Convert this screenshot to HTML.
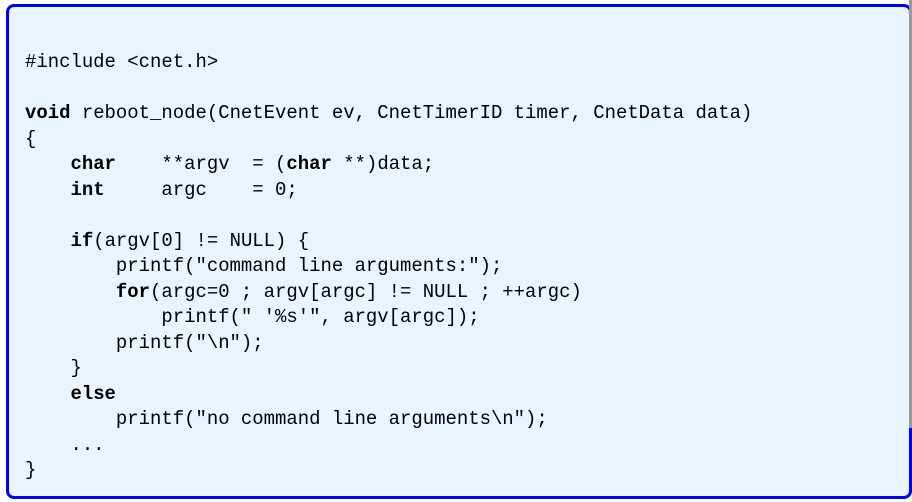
<!DOCTYPE html>
<html><head><style>
html,body{margin:0;padding:0;width:912px;height:502px;background:#fff;overflow:hidden}
.box{position:absolute;left:6px;top:4px;width:900px;height:489px;border:3px solid #0000ff;border-radius:8px;background:#e8f4fe}
.gray{position:absolute;left:909px;top:0;width:3px;height:428px;background:#999}
pre{position:absolute;left:25px;top:50px;margin:0;font-family:"Liberation Mono",monospace;font-size:18.95px;line-height:25.5px;color:#000}
b{font-weight:bold}
</style></head><body>
<div class="box"></div><div class="gray"></div>
<pre>#include &lt;cnet.h&gt;

<b>void</b> reboot_node(CnetEvent ev, CnetTimerID timer, CnetData data)
{
    <b>char</b>    **argv  = (<b>char</b> **)data;
    <b>int</b>     argc    = 0;

    <b>if</b>(argv[0] != NULL) {
        printf("command line arguments:");
        <b>for</b>(argc=0 ; argv[argc] != NULL ; ++argc)
            printf(" '%s'", argv[argc]);
        printf("\n");
    }
    <b>else</b>
        printf("no command line arguments\n");
    ...
}</pre>
</body></html>
